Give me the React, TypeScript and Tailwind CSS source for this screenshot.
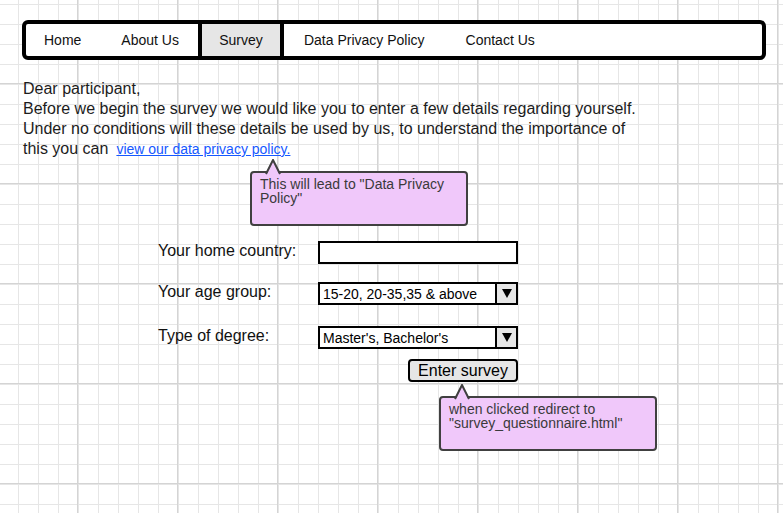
import React from "react";

function Tail() {
  return (
    <svg
      className="absolute -top-[14px] left-[13px]"
      width="16"
      height="17"
      viewBox="0 0 16 17"
    >
      <polygon points="1,17 8,1 15,17" fill="#f0c8fa" />
      <polyline
        points="1,15 8,1 15,15"
        fill="none"
        stroke="#404040"
        strokeWidth="2"
        strokeLinejoin="miter"
      />
    </svg>
  );
}

function Callout({ children, className }: { children: React.ReactNode; className: string }) {
  return (
    <div
      className={
        "absolute w-[218px] h-[55px] border-2 border-[#404040] rounded-[4px] bg-[#f0c8fa] pl-2 pt-[4px] text-[14px] leading-[14px] text-[#3a3a3a] " +
        className
      }
    >
      <Tail />
      {children}
    </div>
  );
}

function Select({ value }: { value: string }) {
  return (
    <div className="w-[200px] h-[23px] border-2 border-black bg-white flex">
      <div className="flex-1 flex items-center pl-[3px] text-[14px] text-black">{value}</div>
      <div className="w-[21px] border-l-2 border-black bg-[#e6e6e6] flex items-center justify-center">
        <svg width="10" height="9" viewBox="0 0 10 9">
          <polygon points="0,0 10,0 5,9" fill="#000" />
        </svg>
      </div>
    </div>
  );
}

export default function App() {
  return (
    <div className="relative w-full h-[513px] overflow-hidden bg-white font-['Liberation_Sans',Arial,sans-serif] bg-[linear-gradient(to_right,#d4d4d4_1px,transparent_1px),linear-gradient(to_bottom,#d4d4d4_1px,transparent_1px),linear-gradient(to_right,#e6e6e6_1px,transparent_1px),linear-gradient(to_bottom,#e6e6e6_1px,transparent_1px)] bg-[size:100px_100px,100px_100px,20px_20px,20px_20px] bg-[position:77px_83px,77px_83px,18px_4px,18px_4px]">
      <div className="pl-[22px] pt-[20px]">
        {/* nav */}
        <nav className="w-[744px] h-[40px] border-4 border-black rounded-[6px] bg-white flex items-stretch text-[14px] text-[#111]">
          <span className="ml-[18px] flex items-center">Home</span>
          <span className="ml-[40px] flex items-center">About Us</span>
          <span className="ml-[19px] w-[86px] border-x-4 border-black bg-[#e6e6e6] flex items-center justify-center">
            Survey
          </span>
          <span className="ml-[20px] flex items-center">Data Privacy Policy</span>
          <span className="ml-[41px] flex items-center">Contact Us</span>
        </nav>

        {/* intro */}
        <div className="mt-[19px] pl-px text-[16px] leading-[20px] text-[#1c1c1c]">
          <p>Dear participant,</p>
          <p>Before we begin the survey we would like you to enter a few details regarding yourself.</p>
          <p>Under no conditions will these details be used by us, to understand the importance of</p>
          <p>
            this you can
            <a href="#" className="ml-[8px] text-[14px] text-[#1558ff] underline">
              view our data privacy policy.
            </a>
          </p>
        </div>

        {/* form */}
        <div className="ml-[136px] mt-[82px] w-[360px] text-[16px] leading-[20px] text-[#111]">
          <div className="flex items-start h-[23px]">
            <label className="w-[160px]">Your home country:</label>
            <div className="w-[200px] h-[23px] border-2 border-black bg-white" />
          </div>
          <div className="flex items-start h-[23px] mt-[18px]">
            <label className="w-[160px]">Your age group:</label>
            <Select value="15-20, 20-35,35 & above" />
          </div>
          <div className="flex items-start h-[23px] mt-[21px]">
            <label className="w-[160px]">Type of degree:</label>
            <Select value="Master's, Bachelor's" />
          </div>
          <div className="flex justify-end mt-[10px]">
            <button className="w-[110px] h-[23px] border-2 border-black rounded-[4px] bg-[#e6e6e6] text-[16px] leading-[18px] text-black">
              Enter survey
            </button>
          </div>
        </div>
      </div>

      <Callout className="left-[250px] top-[171px]">
        This will lead to "Data Privacy
        <br />
        Policy"
      </Callout>
      <Callout className="left-[439px] top-[396px]">
        when clicked redirect to
        <br />
        "survey_questionnaire.html"
      </Callout>
    </div>
  );
}
